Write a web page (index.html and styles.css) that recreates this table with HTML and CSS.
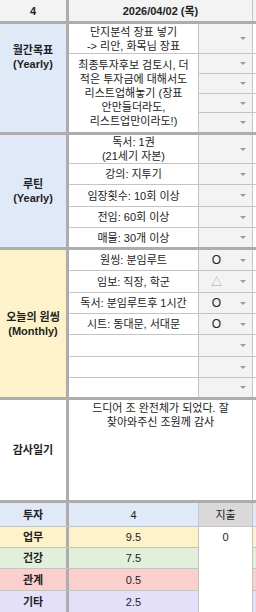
FILE: index.html
```html
<!DOCTYPE html>
<html lang="ko">
<head>
<meta charset="utf-8">
<title>Sheet</title>
<link rel="stylesheet" href="styles.css">
</head>
<body>
<div class="sheet">
  <div class="sec head">
    <div class="cell a hd">4</div>
    <div class="cell bc hd">2026/04/02 (목)</div>
    <div class="cell d hdd"></div>
  </div>

  <div class="sec s1">
    <div class="cell a span blue first">월간목표<br>(Yearly)</div>
    <div class="cell b">단지분석 장표 넣기<br>-&gt; 리안, 화목님 장표</div>
    <div class="cell c dd"><span class="v"></span><i class="arr"></i></div>
    <div class="cell d"></div>
    <div class="cell b span4">최종투자후보 검토시, 더<br>적은 투자금에 대해서도<br>리스트업해놓기 (장표<br>안만들더라도,<br>리스트업만이라도!)</div>
    <div class="cell c dd"><span class="v"></span><i class="arr"></i></div>
    <div class="cell d"></div>
    <div class="cell c dd"><span class="v"></span><i class="arr"></i></div>
    <div class="cell d"></div>
    <div class="cell c dd"><span class="v"></span><i class="arr"></i></div>
    <div class="cell d"></div>
    <div class="cell c dd"><span class="v"></span><i class="arr"></i></div>
    <div class="cell d"></div>
  </div>

  <div class="sec s2">
    <div class="cell a span blue">루틴<br>(Yearly)</div>
    <div class="cell b">독서: 1권<br>(21세기 자본)</div>
    <div class="cell c dd"><span class="v"></span><i class="arr"></i></div>
    <div class="cell d"></div>
    <div class="cell b">강의: 지투기</div>
    <div class="cell c dd"><span class="v"></span><i class="arr"></i></div>
    <div class="cell d"></div>
    <div class="cell b">임장횟수: 10회 이상</div>
    <div class="cell c dd"><span class="v"></span><i class="arr"></i></div>
    <div class="cell d"></div>
    <div class="cell b">전임: 60회 이상</div>
    <div class="cell c dd"><span class="v"></span><i class="arr"></i></div>
    <div class="cell d"></div>
    <div class="cell b">매물: 30개 이상</div>
    <div class="cell c dd"><span class="v"></span><i class="arr"></i></div>
    <div class="cell d"></div>
  </div>

  <div class="sec s3">
    <div class="cell a span yellow">오늘의 원씽<br>(Monthly)</div>
    <div class="cell b">원씽: 분임루트</div>
    <div class="cell c dd"><span class="v">O</span><i class="arr"></i></div>
    <div class="cell d"></div>
    <div class="cell b">임보: 직장, 학군</div>
    <div class="cell c dd"><span class="v tri">△</span><i class="arr"></i></div>
    <div class="cell d"></div>
    <div class="cell b">독서: 분임루트후 1시간</div>
    <div class="cell c dd"><span class="v">O</span><i class="arr"></i></div>
    <div class="cell d"></div>
    <div class="cell b">시트: 동대문, 서대문</div>
    <div class="cell c dd"><span class="v">O</span><i class="arr"></i></div>
    <div class="cell d"></div>
    <div class="cell b"></div>
    <div class="cell c dd"><span class="v"></span><i class="arr"></i></div>
    <div class="cell d"></div>
    <div class="cell b"></div>
    <div class="cell c dd"><span class="v"></span><i class="arr"></i></div>
    <div class="cell d"></div>
    <div class="cell b"></div>
    <div class="cell c dd"><span class="v"></span><i class="arr"></i></div>
    <div class="cell d"></div>
  </div>

  <div class="sec s4">
    <div class="cell a span">감사일기</div>
    <div class="cell bc note">드디어 조 완전체가 되었다. 잘<br>찾아와주신 조원께 감사</div>
    <div class="cell d"></div>
  </div>

  <div class="sec s5">
    <div class="cell a blue">투자</div>
    <div class="cell b blue">4</div>
    <div class="cell c spend">지출</div>
    <div class="cell d blue"></div>

    <div class="cell a yellow">업무</div>
    <div class="cell b yellow">9.5</div>
    <div class="cell c total">0</div>
    <div class="cell d yellow"></div>

    <div class="cell a green">건강</div>
    <div class="cell b green">7.5</div>
    <div class="cell d green"></div>

    <div class="cell a red">관계</div>
    <div class="cell b red">0.5</div>
    <div class="cell d red"></div>

    <div class="cell a purple">기타</div>
    <div class="cell b purple">2.5</div>
    <div class="cell d purple"></div>
  </div>
</div>
</body>
</html>
```

FILE: styles.css
```css
* {
  box-sizing: border-box;
  margin: 0;
  padding: 0;
}

html, body {
  background: #ffffff;
}

body {
  margin: 0;
  width: 256px;
  font-family: "Liberation Sans", "Noto Sans CJK KR", sans-serif;
  font-size: 11px;
  line-height: 14px;
  color: #222222;
}

.sheet {
  width: 256px;
  height: 612px;
  overflow: hidden;
  display: flex;
  flex-direction: column;
}

.sec {
  display: grid;
  grid-template-columns: 69px 129px 54px 4px;
  row-gap: 1px;
  background: #c4c4c4;
  border-bottom: 3px solid #adadad;
}

.head { grid-template-rows: 21px; }
.s1 { grid-template-rows: 29px 19px 19px 18px 19px; }
.s2 { grid-template-rows: 28px 20px 21px 20px 19px; }
.s3 { grid-template-rows: 20px 21px 20px 20px 21px 20px 19px; }
.s4 { grid-template-rows: 100px; }
.s5 {
  grid-template-rows: 23px 20px 20px 21px 21px;
  border-bottom: 0;
}

.cell {
  background: #ffffff;
  display: flex;
  align-items: center;
  justify-content: center;
  text-align: center;
  white-space: nowrap;
}

.a {
  grid-column: 1;
  border-right: 3px solid #adadad;
  font-weight: bold;
  color: #1f1f1f;
}

.span { grid-row: 1 / -1; }

.b { grid-column: 2; }
.bc { grid-column: 2 / span 2; }

.span4 { grid-row: span 4; }

.c {
  grid-column: 3;
  border-left: 1px solid #c4c4c4;
}

.d {
  grid-column: 4;
  border-left: 1px solid #c4c4c4;
}

.hd {
  background: #f3f3f3;
  font-weight: bold;
}

.hdd { background: #f3f3f3; }

.first {
  align-items: flex-start;
  padding-top: 19px;
}

.dd {
  background: #f3f3f3;
  justify-content: space-between;
}

.dd .v {
  flex: 1;
  text-align: center;
  margin-right: 6px;
  font-size: 12px;
}

.dd .tri {
  color: #9e9e9e;
  font-size: 11px;
}

.arr {
  display: block;
  width: 0;
  height: 0;
  margin-right: 6px;
  border-left: 3px solid transparent;
  border-right: 3px solid transparent;
  border-top: 3px solid #9a9a9a;
}

.note {
  align-items: flex-start;
  padding-top: 1px;
}

.spend {
  background: #d9d9d9;
}

.total {
  grid-row: span 4;
  align-items: flex-start;
  line-height: 20px;
}

.blue { background: #dfe9f7; }
.yellow { background: #fef2cb; }
.green { background: #e2efda; }
.red { background: #fccfcf; }
.purple { background: #e4e0f9; }
```
